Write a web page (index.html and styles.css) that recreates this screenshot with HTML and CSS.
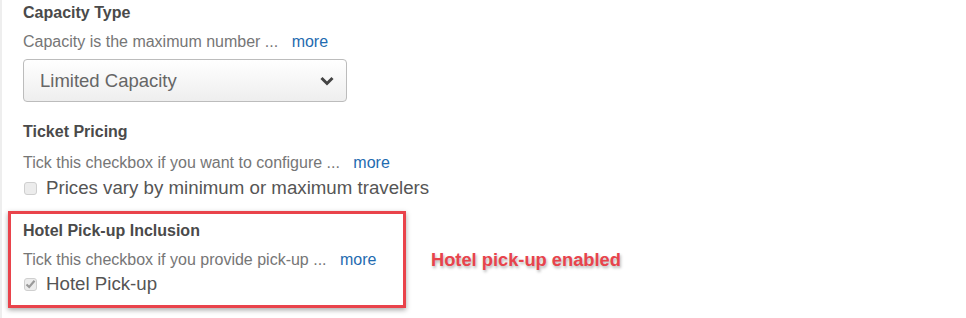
FILE: index.html
```html
<!DOCTYPE html>
<html>
<head>
<meta charset="utf-8">
<link rel="stylesheet" href="styles.css">
</head>
<body>
<div class="page">
  <div class="section first">
    <div class="title">Capacity Type</div>
    <div class="desc">Capacity is the maximum number ... <a class="more">more</a></div>
    <div class="select">
      <span class="select-text">Limited Capacity</span>
      <svg class="chev" width="14" height="10" viewBox="0 0 14 10"><path d="M1.5 2 L7 7.5 L12.5 2" fill="none" stroke="#444" stroke-width="3"/></svg>
    </div>
  </div>
  <div class="section pricing">
    <div class="title">Ticket Pricing</div>
    <div class="desc">Tick this checkbox if you want to configure ... <a class="more">more</a></div>
    <label class="check-row"><span class="box"></span><span class="label">Prices vary by minimum or maximum travelers</span></label>
  </div>
  <div class="hotel-row">
    <div class="highlight">
      <div class="title">Hotel Pick-up Inclusion</div>
      <div class="desc">Tick this checkbox if you provide pick-up ... <a class="more">more</a></div>
      <label class="check-row"><span class="box checked"><svg width="11" height="10" viewBox="0 0 11 10"><path d="M1.5 5.5 L4.2 8 L9.5 1.8" fill="none" stroke="#9a9a9a" stroke-width="2.2"/></svg></span><span class="label">Hotel Pick-up</span></label>
    </div>
    <div class="note">Hotel pick-up enabled</div>
  </div>
</div>
</body>
</html>
```
FILE: styles.css
```css
html, body {
  margin: 0;
  padding: 0;
  background: #fff;
}
body {
  font-family: "Liberation Sans", Arial, sans-serif;
  width: 966px;
  height: 318px;
  overflow: hidden;
}
.page {
  border-left: 2px solid #eeeeee;
  height: 318px;
  box-sizing: border-box;
  padding-top: 3px;
}
.section {
  padding-left: 21px;
}
.title {
  font-size: 16px;
  line-height: 20px;
  font-weight: bold;
  color: #4a4a4a;
}
.desc {
  font-size: 16px;
  line-height: 20px;
  color: #767676;
  margin-top: 9px;
}
.more {
  color: #1f6bb0;
  margin-left: 9px;
  cursor: pointer;
}
.select {
  margin-top: 7px;
  width: 324px;
  height: 43px;
  box-sizing: border-box;
  border: 1px solid #bcbcbc;
  border-radius: 4px;
  background: linear-gradient(#ffffff, #eeeeee);
  display: flex;
  align-items: center;
  justify-content: space-between;
  padding: 0 12px 0 16px;
}
.select-text {
  font-size: 18.5px;
  color: #666;
}
.chev {
  display: block;
}
.pricing {
  margin-top: 20px;
}
.pricing .desc {
  margin-top: 11px;
}
.check-row {
  display: flex;
  align-items: center;
  margin-top: 3px;
  height: 24px;
}
.box {
  width: 13px;
  height: 13px;
  box-sizing: border-box;
  border: 1px solid #cfcfcf;
  border-radius: 3px;
  background: #ececec;
  margin-left: 1px;
  margin-right: 9px;
  display: flex;
  align-items: center;
  justify-content: center;
}
.box svg {
  display: block;
}
.label {
  font-size: 18.7px;
  line-height: 24px;
  color: #555;
}
.hotel-row {
  display: flex;
  align-items: flex-start;
  margin-top: 11px;
  margin-left: 6px;
}
.highlight {
  width: 398px;
  height: 97px;
  box-sizing: border-box;
  border: 3px solid #e9434b;
  box-shadow: 0 2px 5px rgba(0, 0, 0, 0.35);
  padding: 7px 12px 0 12px;
}
.highlight .check-row {
  margin-top: 2px;
}
.note {
  margin-left: 25px;
  margin-top: 38px;
  font-size: 18.3px;
  line-height: 22px;
  font-weight: bold;
  color: #e8434c;
  text-shadow: 1px 2px 3px rgba(0, 0, 0, 0.3);
}
```
